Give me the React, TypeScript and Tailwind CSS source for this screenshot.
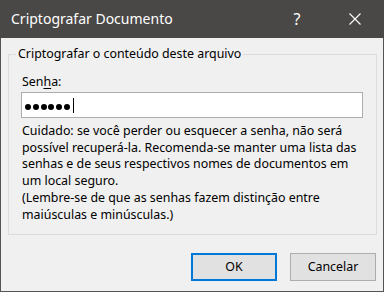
import React from 'react';

const font = { fontFamily: '"Noto Sans", "Liberation Sans", sans-serif' };

const App: React.FC = () => {
  const dots = [0, 1, 2, 3, 4, 5];

  return (
    <div
      className="w-[384px] h-[292px] flex flex-col bg-[#f0f0f0] border-x border-b border-[#555453] text-black"
      style={font}
    >
      {/* barra de título */}
      <div className="h-[38px] -mx-px bg-[#4a4846] flex items-center text-white shrink-0">
        <span className="pl-[11px] text-[14px] leading-none flex-1">Criptografar Documento</span>
        <span className="w-[50px] text-center text-[16px] leading-none mr-[27px]">?</span>
        <svg className="w-[12px] h-[12px] mr-[23px]" viewBox="0 0 12 12" stroke="white" strokeWidth="1.1">
          <path d="M0.5 0.5 L11.5 11.5 M11.5 0.5 L0.5 11.5" />
        </svg>
      </div>

      {/* grupo */}
      <fieldset className="mt-[8px] ml-[7px] w-[369px] h-[189px] border border-[#dcdcdc] px-[13px] text-[12.4px] leading-[16.7px]">
        <legend className="-ml-[6px] px-[2px] leading-[16px]">Criptografar o conteúdo deste arquivo</legend>
        <div className="mt-[12px] leading-[16px]">
          Sen<span className="underline underline-offset-2">h</span>a:
        </div>
        <div className="mt-[2px] h-[26px] w-[342px] -ml-px bg-white border border-[#adadad] flex items-center pl-[3px] gap-[1.8px]">
          {dots.map(d => (
            <span key={d} className="w-[6px] h-[6px] rounded-full bg-black mt-[3px]" />
          ))}
          <span className="w-px h-[15px] bg-black ml-[1px]" />
        </div>
        <p className="mt-[5px]">
          Cuidado: se você perder ou esquecer a senha, não será
          <br />
          possível recuperá-la. Recomenda-se manter uma lista das
          <br />
          senhas e de seus respectivos nomes de documentos em
          <br />
          um local seguro.
          <br />
          (Lembre-se de que as senhas fazem distinção entre
          <br />
          maiúsculas e minúsculas.)
        </p>
      </fieldset>

      {/* botões */}
      <div className="flex justify-end gap-[13px] mt-[18px] mr-[7px] text-[12.4px]">
        <button className="w-[86px] h-[28px] border-2 border-[#0078d7] bg-[#e1e1e1]">OK</button>
        <button className="w-[86px] h-[28px] border border-[#adadad] bg-[#e1e1e1]">Cancelar</button>
      </div>
    </div>
  );
};

export default App;
